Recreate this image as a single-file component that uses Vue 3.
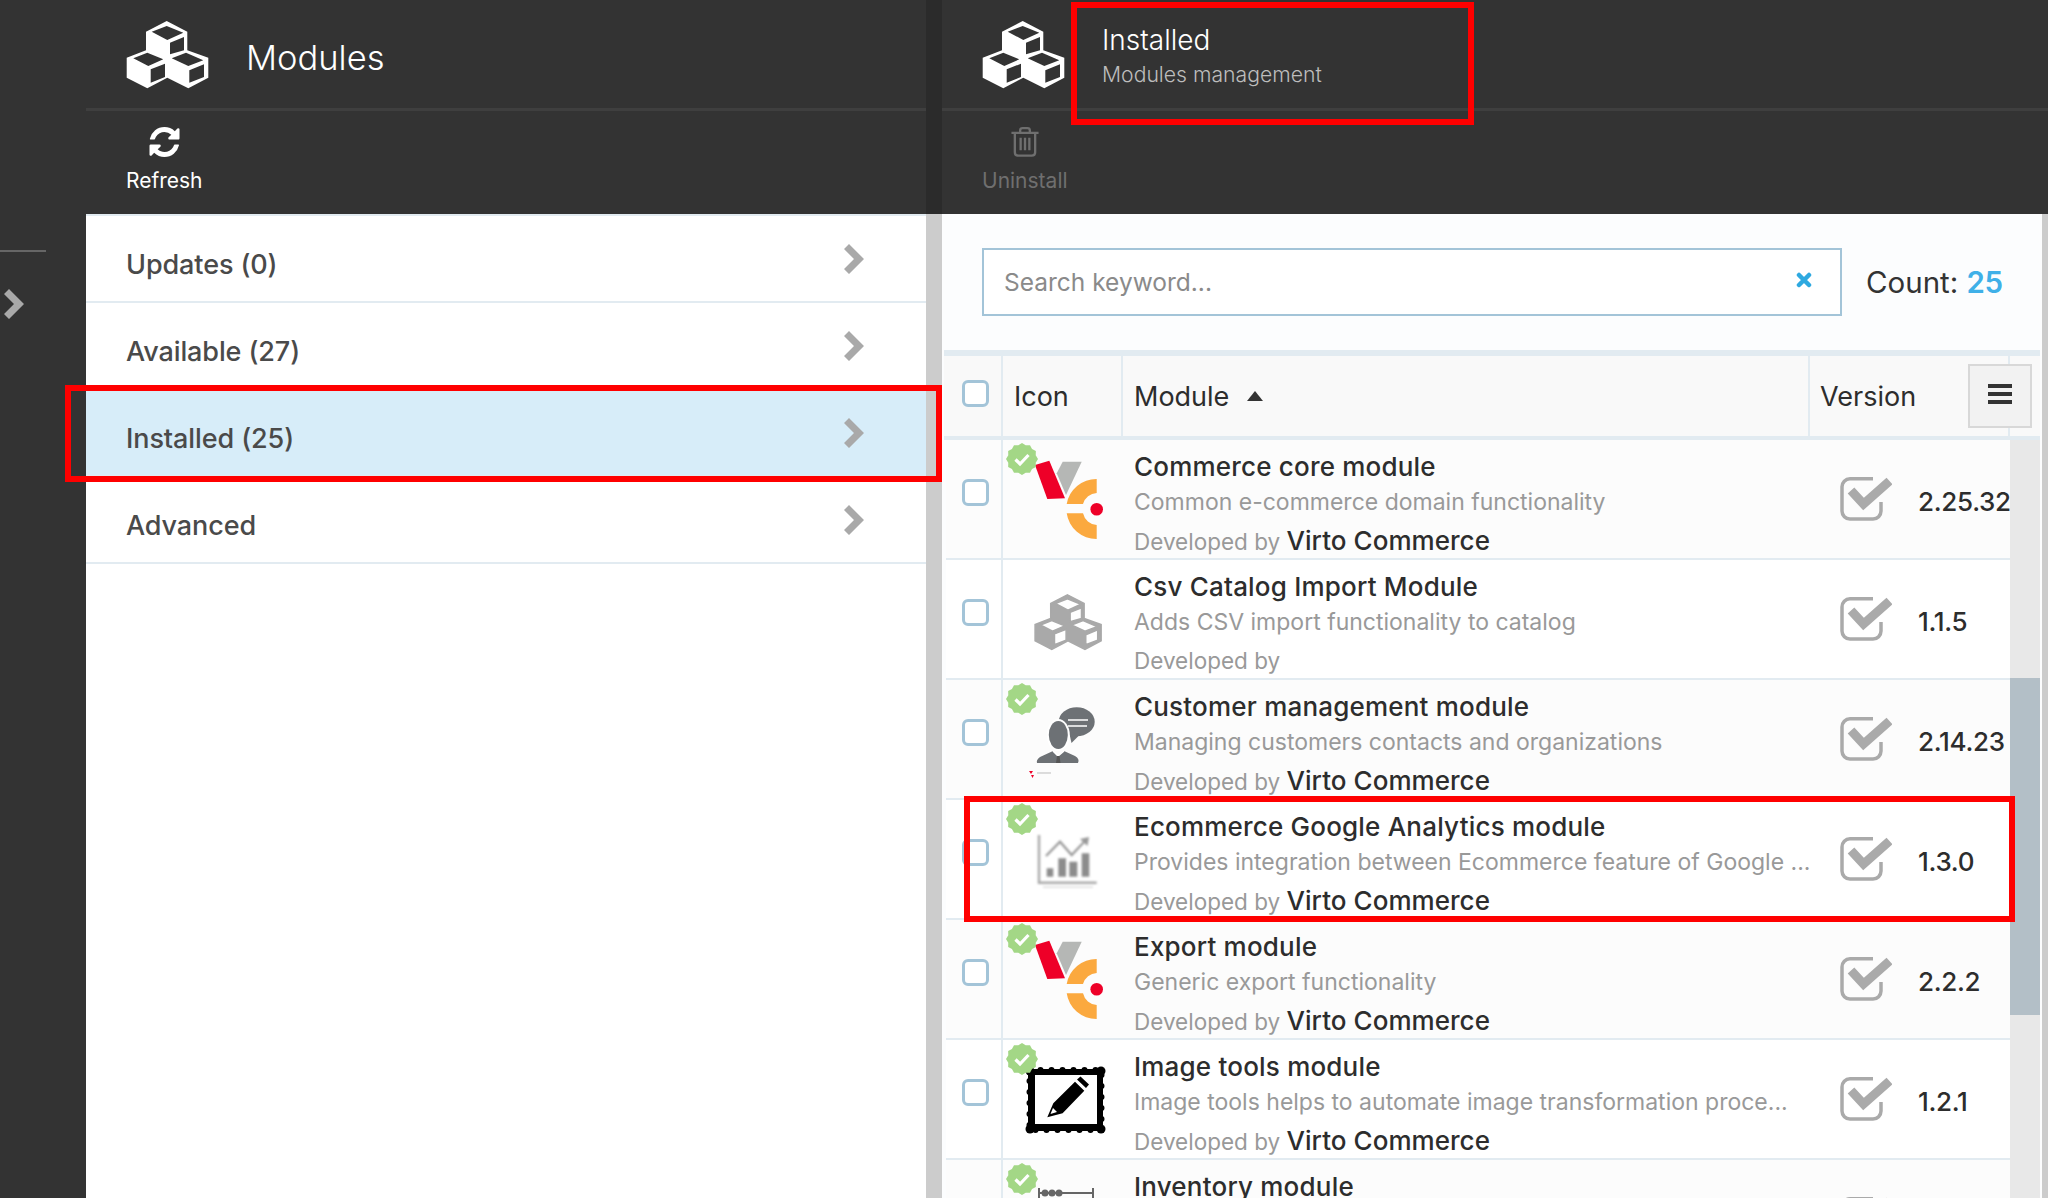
<template>
  <div class="page">
    <nav class="side">
      <div class="side-line"></div>
      <svg class="side-chev" viewBox="0 0 20 30"><path d="M0 5 5 0l15 15L5 30l-5-5 10-10z" /></svg>
    </nav>

    <section class="blade blade-left">
      <header class="blade-head">
        <svg class="cubes" viewBox="0 0 84 70"><path fill-rule="evenodd" :d="cubePath" /></svg>
        <div class="blade-title big">Modules</div>
      </header>
      <div class="toolbar">
        <div class="tool">
          <svg class="tool-icon" viewBox="128 128 1536 1536"><path fill="#fff" d="M1639 1056q0 5-1 7-64 268-268 434.5t-478 166.5q-146 0-282.5-55t-243.5-157l-129 129q-19 19-45 19t-45-19-19-45v-448q0-26 19-45t45-19h448q26 0 45 19t19 45-19 45l-137 137q71 66 161 102t187 36q134 0 250-65t186-179q11-17 53-117 8-23 30-23h192q13 0 22.5 9.5t9.5 22.5zm25-800v448q0 26-19 45t-45 19h-448q-26 0-45-19t-19-45 19-45l138-138q-148-137-349-137-134 0-250 65t-186 179q-11 17-53 117-8 23-30 23h-199q-13 0-22.5-9.5t-9.5-22.5v-7q65-268 270-434.5t480-166.5q146 0 284 55.5t245 156.5l130-129q19-19 45-19t45 19 19 45z" /></svg>
          <span>Refresh</span>
        </div>
      </div>
      <div class="menu">
        <div v-for="item in menu" :key="item.label" class="menu-row" :class="{ active: item.active }">
          <span class="menu-label">{{ item.label }}</span>
          <svg class="menu-chev" viewBox="0 0 20 30"><path d="M0 5 5 0l15 15L5 30l-5-5 10-10z" /></svg>
        </div>
      </div>
    </section>

    <div class="splitter"></div>

    <section class="blade blade-right">
      <header class="blade-head">
        <svg class="cubes" viewBox="0 0 84 70"><path fill-rule="evenodd" :d="cubePath" /></svg>
        <div class="title-stack">
          <div class="blade-title">Installed</div>
          <div class="blade-sub">Modules management</div>
        </div>
      </header>
      <div class="toolbar">
        <div class="tool disabled">
          <svg class="tool-icon trash" viewBox="0 0 28 31" fill="none" stroke="#6f6f6f" stroke-width="2.4">
            <path d="M0 6h28M9 6V3.5Q9 1.2 11.5 1.2h5Q19 1.2 19 3.5V6M3.5 6v20q0 3.6 3.6 3.6h13.8q3.6 0 3.6-3.6V6" />
            <path d="M9.500 11v13M14 11v13M18.500 11v13" />
          </svg>
          <span>Uninstall</span>
        </div>
      </div>

      <div class="content">
        <div class="search-bar">
          <div class="search">
            <span class="search-text">Search keyword...</span>
            <svg class="clear" viewBox="0 0 16 16"><path d="M3 3l10 10M13 3 3 13" stroke="#2ea9e0" stroke-width="4.500" stroke-linecap="round" /></svg>
          </div>
          <div class="count">Count: <b>25</b></div>
        </div>

        <div class="grid-head">
          <div class="hcell hcheck"><span class="check"></span></div>
          <div class="hcell hicon">Icon</div>
          <div class="hcell hmodule">Module <i class="sort"></i></div>
          <div class="hcell hversion">Version</div>
          <div class="hcell hend"></div>
          <div class="grid-menu"><i></i><i></i><i></i></div>
        </div>

        <div class="grid-body">
          <div class="rows">
            <div v-for="row in rows" :key="row.title" class="row">
              <div class="cell-check"><span class="check"></span></div>
              <div class="cell-icon">
                <svg v-if="row.installed" class="badge" viewBox="0 0 32 32">
                  <path fill="#a3d786" :d="badgePath" />
                  <path d="M9.500 16.500l4.500 4.500 8.500-9" fill="none" stroke="#fff" stroke-width="3.200" />
                </svg>

                <svg class="mod-icon" viewBox="0 0 81 80">
                  <template v-if="row.icon === 'vc'">
                    <path fill="#ee0028" d="M10 5 24.300 .7 40 38.300 22.300 39z" />
                    <path fill="#b5b7b5" d="M37.700 1.700h19L41 35 31.700 13.300z" />
                    <path fill="#fba93f" d="M71.700 19A30 30 0 0 0 41.700 44H58A15 15 0 0 1 71.700 33zM41.700 53.300A30 30 0 0 0 71.700 79V65A15 15 0 0 1 58 53.300z" />
                    <circle cx="71.700" cy="49.300" r="6.300" fill="#ee0028" />
                  </template>
                  <template v-else-if="row.icon === 'cube'">
                    <path fill="#a9a9a9" stroke="#a9a9a9" stroke-width="1.800" fill-rule="evenodd" transform="translate(9.500 14) scale(.81)" :d="cubePath" />
                  </template>
                  <template v-else-if="row.icon === 'person'">
                    <ellipse cx="51.700" cy="21.700" rx="18" ry="14.500" fill="#6d7175" />
                    <path d="M44 32l2.500 11 9-9z" fill="#6d7175" />
                    <path d="M43 20h20M43 26h19" stroke="#fff" stroke-width="1.500" />
                    <ellipse cx="33.300" cy="35" rx="11.500" ry="16" fill="#fff" />
                    <ellipse cx="33.300" cy="35" rx="9.500" ry="14" fill="#6d7175" />
                    <path d="M12 63q-1-3 3-6l13-6 5 5 6-5 11 5q5 3 3 7z" fill="#6d7175" />
                    <path d="M28 51l5 5 6-5" fill="none" stroke="#fff" stroke-width="1.500" />
                    <path d="M32 56h2.500l1 7h-4.500z" fill="#555" />
                    <path d="M4 71l2 3 2-3zM6 75h3l-1.500 3z" fill="#ee0028" />
                    <path d="M12 73h14" stroke="#bbb" stroke-width="1" />
                  </template>
                  <template v-else-if="row.icon === 'chart'">
                    <g filter="url(#soft)">
                      <path d="M14 15v47.700h57.700" fill="none" stroke="#aaa" stroke-width="2.500" />
                      <path d="M21 36 35 21.700 46.700 35 59 22" fill="none" stroke="#999" stroke-width="2.200" />
                      <path d="M55 19l9-2-1.500 9z" fill="#999" />
                      <path d="M21.700 48.300h6.600v8.400h-6.600zM33.300 38.300H41v18.400h-7.700zM44.300 41.700h8v15h-8zM56.700 33.300h7.600v23.400h-7.600z" fill="#8c8c8c" />
                      <path d="M18 67h50" stroke="#ddd" stroke-width="1.500" />
                    </g>
                    <defs><filter id="soft"><feGaussianBlur stdDeviation=".8" /></filter></defs>
                  </template>
                  <template v-else-if="row.icon === 'frame'">
                    <rect x="3" y="9" width="75" height="62" rx="3" fill="#000" />
                    <rect x="4.500" y="10" width="72" height="60" fill="none" stroke="#000" stroke-width="6" stroke-dasharray="0 11" stroke-linecap="round" />
                    <circle cx="5" cy="11" r="4.500" /><circle cx="76" cy="11" r="4.500" /><circle cx="5" cy="69" r="4.500" /><circle cx="76" cy="69" r="4.500" />
                    <rect x="10" y="15" width="62" height="49" fill="#fff" />
                    <path d="M22.300 57.300l6-14L50 21.700l9.300 9L37.600 53.300zM52 19.500l3.500-3 8.500 8-3 3.500z" fill="#000" />
                    <path d="M25.500 54l2.500-6 4 4z" fill="#fff" />
                  </template>
                  <template v-else>
                    <path d="M14 13h54M14 8v10M68 8v10" stroke="#666" stroke-width="2" />
                    <circle cx="20" cy="13" r="3.500" fill="#666" /><circle cx="27" cy="13" r="3.500" fill="#666" /><circle cx="34" cy="13" r="3.500" fill="#666" />
                  </template>
                </svg>
              </div>
              <div class="cell-text">
                <div class="row-title">{{ row.title }}</div>
                <div class="row-desc">{{ row.desc }}</div>
                <div class="row-dev">Developed by <span v-if="row.vendor">{{ row.vendor }}</span></div>
              </div>
              <div class="cell-state">
                <svg viewBox="0 0 52 44" class="state" fill="none" stroke="#aaa">
                  <path stroke-width="3.500" d="M33 1.800H10A8 8 0 0 0 2 10v24a8 8 0 0 0 8 8h23a8 8 0 0 0 8-8V25" />
                  <path stroke-width="9" d="M11 13.500 23.500 27 49.500 4" />
                </svg>
              </div>
              <div class="cell-version">{{ row.version }}</div>
            </div>
          </div>
          <div class="scrollbar"><div class="thumb"></div></div>
        </div>
      </div>
    </section>

    <div class="mark mark-head"></div>
    <div class="mark mark-menu"></div>
    <div class="mark mark-row"></div>
  </div>
</template>

<script setup>
const cubePath =
  'M40.700 1 61.300 11.700V30.300L82.300 37.700V57.700L62.300 68.300 41.300 57.700 21.300 68.300 .7 57.700V37.700L20 30.300V11.700z' +
  'M25.700 11.700 40.700 6 57.300 12.700 41.300 20z' +
  'M44 22.700 58 17V30.300L44 34.300z' +
  'M7.300 38.300 21.300 32.700 37.300 39.300 22.300 46z' +
  'M24.700 49.300 39 43.700V57L24.700 62.700z' +
  'M45.700 38.300 60 32.700 77.300 40.300 62.300 46z' +
  'M63.300 50.300 78 44.300V57L63.300 62.700z'

// scalloped seal behind the check mark
const badgePath = (() => {
  const pts = []
  for (let i = 0; i < 24; i++) {
    const r = i % 2 ? 14.200 : 16
    const a = (i / 24) * Math.PI * 2
    pts.push((16 + r * Math.cos(a)).toFixed(2) + ' ' + (16 + r * Math.sin(a)).toFixed(2))
  }
  return 'M' + pts.join('L') + 'z'
})()

const menu = [
  { label: 'Updates (0)' },
  { label: 'Available (27)' },
  { label: 'Installed (25)', active: true },
  { label: 'Advanced' }
]

const rows = [
  { title: 'Commerce core module', desc: 'Common e-commerce domain functionality', vendor: 'Virto Commerce', version: '2.25.32', icon: 'vc', installed: true },
  { title: 'Csv Catalog Import Module', desc: 'Adds CSV import functionality to catalog', vendor: '', version: '1.1.5', icon: 'cube', installed: false },
  { title: 'Customer management module', desc: 'Managing customers contacts and organizations', vendor: 'Virto Commerce', version: '2.14.23', icon: 'person', installed: true },
  { title: 'Ecommerce Google Analytics module', desc: 'Provides integration between Ecommerce feature of Google ...', vendor: 'Virto Commerce', version: '1.3.0', icon: 'chart', installed: true },
  { title: 'Export module', desc: 'Generic export functionality', vendor: 'Virto Commerce', version: '2.2.2', icon: 'vc', installed: true },
  { title: 'Image tools module', desc: 'Image tools helps to automate image transformation proce...', vendor: 'Virto Commerce', version: '1.2.1', icon: 'frame', installed: true },
  { title: 'Inventory module', desc: '', vendor: '', version: '', icon: 'abacus', installed: true }
]
</script>

<style>
html, body { margin: 0; background: #333; }
</style>

<style scoped>
.page {
  position: relative;
  display: flex;
  width: 2048px;
  height: 1198px;
  overflow: hidden;
  background: #333;
  font-family: Inter, "Noto Sans", sans-serif;
  color: #2d2d2d;
}

.side {
  width: 86px;
  flex-shrink: 0;
  padding-top: 250px;
  box-sizing: border-box;
}
.side-line { width: 46px; height: 2px; background: #666; }
.side-chev { display: block; width: 20px; height: 30px; margin: 37px 0 0 4px; fill: #a9a9a9; }

.blade { display: flex; flex-direction: column; height: 100%; }
.blade-left { width: 840px; flex-shrink: 0; background: #fff; }
.blade-right { flex: 1; min-width: 0; background: #ccc; }

.splitter {
  width: 16px;
  flex-shrink: 0;
  background: linear-gradient(#2b2b2b 214px, #ccc 214px);
}

.blade-head {
  display: flex;
  align-items: center;
  height: 108px;
  padding-left: 40px;
  background: #333;
  box-sizing: border-box;
  color: #fff;
}
.cubes { width: 84px; height: 70px; fill: #fff; flex-shrink: 0; margin-top: 1px; }
.blade-title { font-size: 30px; font-weight: 300; }
.blade-title.big { font-size: 34.500px; margin-left: 36px; padding-top: 7px; }
.title-stack { margin-left: 36px; padding-top: 7px; }
.title-stack .blade-title { font-size: 28px; line-height: 32px; margin-top: -2px; }
.blade-sub { font-size: 21.200px; line-height: 32px; color: #bdbdbd; font-weight: 300; margin-top: 2px; }

.toolbar {
  height: 103px;
  padding-left: 40px;
  background: #333;
  border-top: 3px solid #3f3f3f;
  flex-shrink: 0;
}
.tool {
  display: inline-flex;
  flex-direction: column;
  align-items: center;
  padding-top: 16px;
  font-size: 21px;
  line-height: 28px;
  color: #fff;
}
.tool.disabled { color: #6f6f6f; }
.tool-icon { width: 31px; height: 30px; margin-bottom: 10px; }
.tool-icon.trash { width: 28px; }

.menu { flex: 1; border-top: 2px solid #e2ebf1; background: #fff; }
.menu-row {
  display: flex;
  align-items: center;
  justify-content: space-between;
  height: 87px;
  padding: 0 62px 0 40px;
  border-bottom: 2px solid #e2ebf1;
  box-sizing: border-box;
  font-size: 27px;
  font-weight: 500;
  letter-spacing: -.1px;
  color: #4a4a4a;
}
.menu-row.active { background: #d7edf9; }
.menu-label { padding-top: 11px; }
.menu-chev { width: 20px; height: 30px; fill: #a9a9a9; }

.content {
  flex: 1;
  background: #fcfdfe;
  display: flex;
  flex-direction: column;
  min-height: 0;
  margin-right: 6px;
}

.search-bar {
  display: flex;
  align-items: center;
  height: 136px;
  padding: 0 0 0 40px;
  box-sizing: border-box;
  flex-shrink: 0;
}
.search {
  display: flex;
  align-items: center;
  justify-content: space-between;
  width: 860px;
  height: 68px;
  padding: 0 28px 0 20px;
  border: 2px solid #a3c4d8;
  background: #fff;
  box-sizing: border-box;
}
.search-text { font-size: 24.500px; color: #8a8a8a; }
.clear { width: 16px; height: 16px; margin-top: -4px; }
.count { margin-left: 24px; font-size: 29.500px; color: #333; white-space: nowrap; }
.count b { color: #3fb0e8; font-weight: 600; letter-spacing: -.5px; }

.grid-head {
  position: relative;
  display: flex;
  height: 90px;
  margin-left: 2px;
  width: 1096px;
  border-top: 6px solid #e2ebf1;
  border-bottom: 4px solid #e2ebf1;
  background: #f9f9f9;
  box-sizing: border-box;
  font-size: 27px;
  flex-shrink: 0;
}
.hcell {
  display: flex;
  align-items: center;
  border-right: 2px solid #e2ebf1;
  box-sizing: border-box;
}
.hcheck { width: 59px; padding-left: 18px; padding-bottom: 6px; }
.hicon { width: 120px; padding-left: 11px; }
.hmodule { width: 687px; padding-left: 11px; }
.hversion { width: 200px; padding-left: 10px; }
.hend { flex: 1; border-right: 0; }
.sort {
  display: inline-block;
  margin-left: 18px;
  border: 8.500px solid transparent;
  border-top: 0;
  border-bottom: 10px solid #333;
}
.grid-menu {
  position: absolute;
  left: 1024px;
  top: 8px;
  width: 64px;
  height: 64px;
  padding-top: 18px;
  box-sizing: border-box;
  border: 2px solid #d8d8d8;
  background: #f2f2f2;
  display: flex;
  flex-direction: column;
  align-items: center;
  gap: 4px;
}
.grid-menu i { display: block; width: 24px; height: 4px; background: #333; }

.grid-body { display: flex; flex: 1; min-height: 0; margin-left: 4px; width: 1094px; }
.rows { width: 1064px; flex-shrink: 0; }
.row {
  display: flex;
  height: 120px;
  border-bottom: 2px solid #e2ebf1;
  box-sizing: border-box;
  background: #fff;
}
.row:nth-child(odd) { background: #fcfcfc; }

.check {
  display: block;
  width: 27px;
  height: 27px;
  border: 3px solid #a3c4d8;
  border-radius: 6px;
  background: #fff;
  box-sizing: border-box;
}
.cell-check {
  width: 57px;
  padding: 39px 0 0 16px;
  border-right: 2px solid #e2ebf1;
  box-sizing: border-box;
  flex-shrink: 0;
}
.cell-icon { position: relative; width: 131px; flex-shrink: 0; }
.mod-icon { position: absolute; left: 22px; top: 20px; width: 81px; height: 80px; }
.badge { position: absolute; left: 3px; top: 3px; width: 32px; height: 32px; z-index: 1; }

.cell-text { width: 675px; flex-shrink: 0; min-width: 0; padding-top: 9px; }
.row-title { font-size: 26px; line-height: 36px; font-weight: 500; letter-spacing: .2px; color: #2d2d2d; }
.row-desc {
  font-size: 23px;
  line-height: 34px;
  height: 34px;
  color: #999;
  white-space: nowrap;
}
.row-dev { font-size: 22.500px; line-height: 44px; color: #999; margin-top: 0; }
.row-dev span { font-size: 26px; font-weight: 500; letter-spacing: .05px; color: #2d2d2d; }

.cell-state { width: 109px; padding: 37px 0 0 31px; box-sizing: border-box; flex-shrink: 0; }
.state { display: block; width: 52px; height: 44px; }
.cell-version {
  flex: 1;
  min-width: 0;
  overflow: hidden;
  white-space: nowrap;
  font-size: 26px;
  font-weight: 500;
  letter-spacing: -.3px;
  line-height: 124px;
  color: #2d2d2d;
}

.scrollbar { width: 30px; background: #e8e8e8; flex-shrink: 0; padding-top: 238px; }
.thumb { height: 337px; background: #b3bfc7; }

.mark { position: absolute; border: 6px solid #f00; box-sizing: border-box; z-index: 5; }
.mark-head { left: 1071px; top: 2px; width: 403px; height: 123px; }
.mark-menu { left: 65px; top: 385px; width: 877px; height: 97px; }
.mark-row { left: 964px; top: 796px; width: 1051px; height: 126px; }
</style>
